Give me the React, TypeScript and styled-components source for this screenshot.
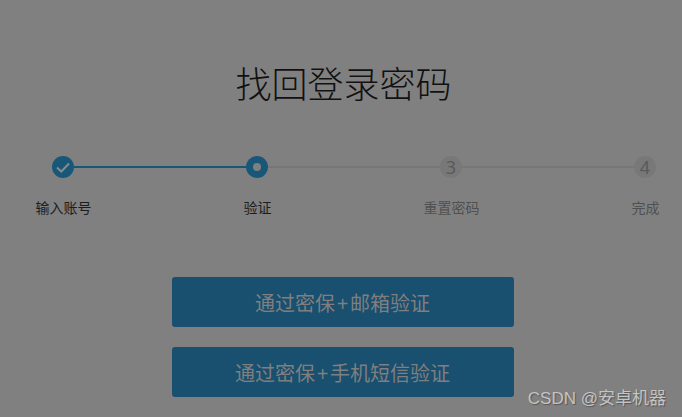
import * as React from 'react';
import styled, { createGlobalStyle } from 'styled-components';

const GlobalStyle = createGlobalStyle`
  html, body {
    margin: 0;
    padding: 0;
    width: 682px;
    height: 417px;
    overflow: hidden;
    background: #808080;
    font-family: "Liberation Sans", "Noto Sans CJK SC", sans-serif;
  }
`;

const Page = styled.div`
  position: relative;
  width: 682px;
  height: 417px;
  overflow: hidden;
  background: #808080;
`;

const Title = styled.h1`
  margin: 0;
  padding: 61px 0 0 5px;
  height: 49px;
  font-size: 36px;
  line-height: 50px;
  font-weight: 300;
  text-align: center;
  color: #111;
`;

const Track = styled.div`
  display: flex;
  align-items: center;
  width: 604px;
  margin: 46px 0 0 52px;
`;

const Connector = styled.div<{ $done?: boolean }>`
  flex: 1;
  height: 2px;
  background: ${(p) => (p.$done ? '#195778' : '#777')};
`;

const Dot = styled.div<{ $active?: boolean }>`
  flex: none;
  display: flex;
  align-items: center;
  justify-content: center;
  width: 22px;
  height: 22px;
  border-radius: 50%;
  background: ${(p) => (p.$active ? '#195778' : '#787878')};
  color: #5a5a5a;
  font-family: "Noto Sans", sans-serif;
  font-size: 18px;
  font-weight: 400;
`;

const InnerDot = styled.span`
  width: 8px;
  height: 8px;
  border-radius: 50%;
  background: #808080;
`;

const Labels = styled.div`
  display: grid;
  grid-template-columns: repeat(4, 194px);
  margin: 20px 0 0 -33.5px;
  width: 776px;
`;

const Label = styled.div<{ $active?: boolean }>`
  font-size: 14px;
  line-height: 20px;
  text-align: center;
  color: ${(p) => (p.$active ? '#1c1c1c' : '#505050')};
`;

const Actions = styled.div`
  display: flex;
  flex-direction: column;
  gap: 20px;
  width: 342px;
  margin: 59px 0 0 172px;
`;

const ActionButton = styled.button`
  height: 50px;
  padding: 0 1px 0 0;
  border: none;
  border-radius: 3px;
  background: #194f6f;
  color: #7f7f7f;
  font-family: inherit;
  font-size: 20px;
`;

const Plus = styled.span`
  padding: 0 1.6px;
`;

const Watermark = styled.div`
  position: absolute;
  right: 16px;
  bottom: 7px;
  font-size: 17px;
  line-height: 22px;
  color: #c4c4c4;
  text-shadow: 1px 1px 1px #555;
`;

const steps = ['输入账号', '验证', '重置密码', '完成'];

const App = () => {
  return (
    <Page>
      <GlobalStyle />
      <Title>找回登录密码</Title>
      <Track>
        <Dot $active>
          <svg width="14" height="14" viewBox="0 0 14 14" fill="none">
            <path d="M1 7.5 L5.3 11.5 L13 3.5" stroke="#8a8a8a" strokeWidth="2" />
          </svg>
        </Dot>
        <Connector $done />
        <Dot $active>
          <InnerDot />
        </Dot>
        <Connector />
        <Dot>3</Dot>
        <Connector />
        <Dot>4</Dot>
      </Track>
      <Labels>
        {steps.map((s, i) => (
          <Label key={s} $active={i < 2}>
            {s}
          </Label>
        ))}
      </Labels>
      <Actions>
        <ActionButton>通过密保<Plus>+</Plus>邮箱验证</ActionButton>
        <ActionButton>通过密保<Plus>+</Plus>手机短信验证</ActionButton>
      </Actions>
      <Watermark>CSDN @安卓机器</Watermark>
    </Page>
  );
};

export default App;
